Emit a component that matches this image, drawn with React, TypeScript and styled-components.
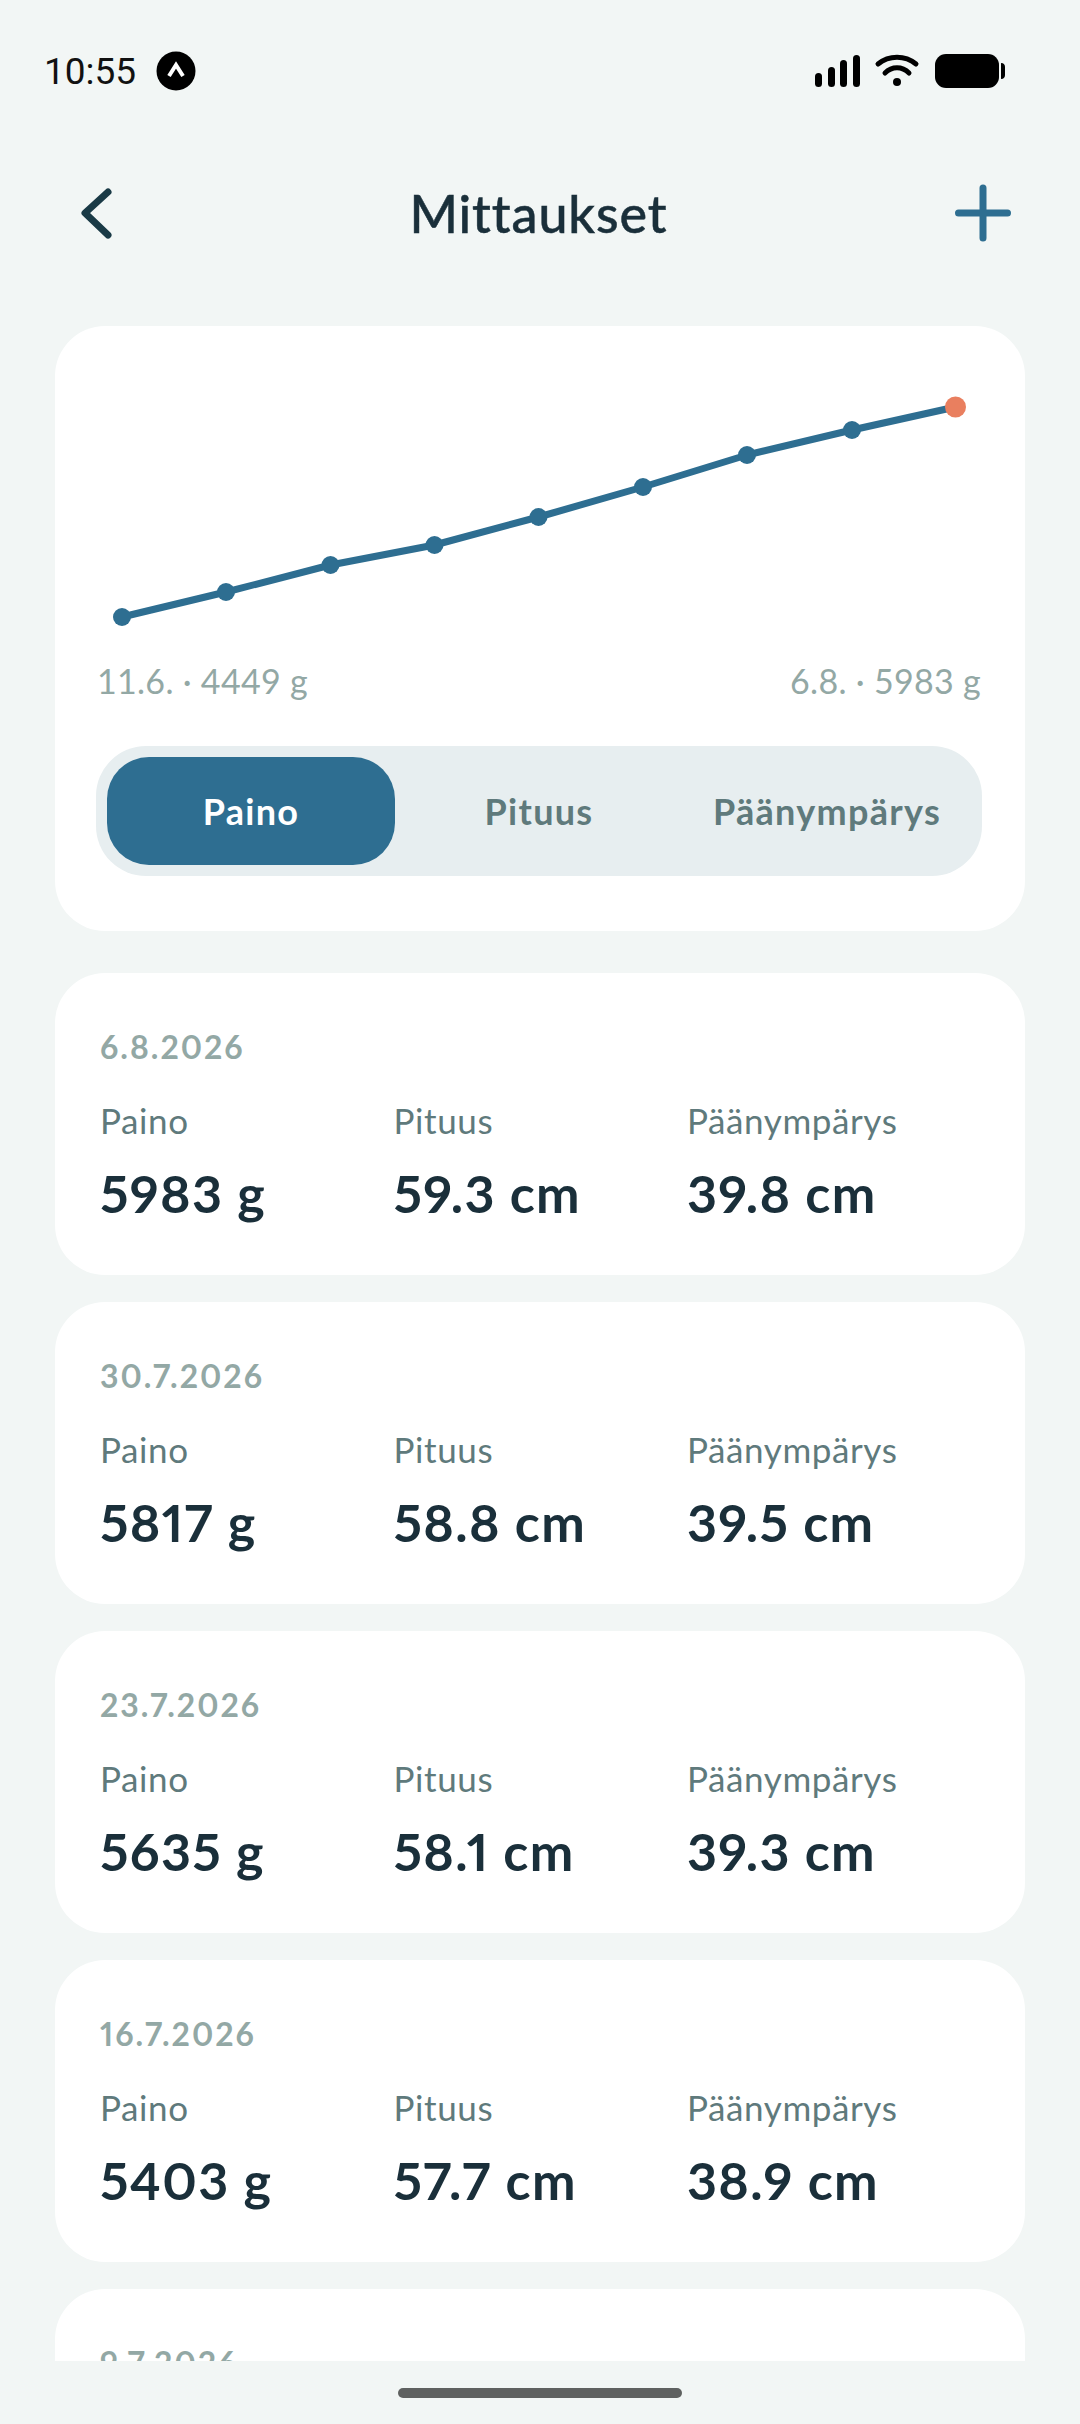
import React from "react";
import styled, { createGlobalStyle } from "styled-components";

const Global = createGlobalStyle`
  html, body { margin: 0; padding: 0; background: #f2f6f5; }
  * { box-sizing: border-box; }
`;

const Screen = styled.div`
  width: 1080px;
  height: 2424px;
  background: #f2f6f5;
  display: flex;
  flex-direction: column;
  overflow: hidden;
  position: relative;
  font-family: "Lato", "Noto Sans", sans-serif;
  font-variant-numeric: proportional-nums;
`;

const StatusBar = styled.div`
  height: 92px;
  flex: none;
  padding: 0 75px 0 44px;
  display: flex;
  align-items: flex-end;
  justify-content: space-between;
`;

const StatusLeft = styled.div`
  display: flex;
  align-items: center;
  gap: 20px;
  height: 40px;
  margin-bottom: 1px;
`;

const StatusRight = styled.svg`
  display: block;
  margin-bottom: 4px;
`;

const Clock = styled.span`
  font-family: Roboto, sans-serif;
  font-size: 37px;
  font-variant-numeric: tabular-nums;
  color: #111;
`;

const NavBar = styled.div`
  height: 234px;
  flex: none;
  padding: 8px 67px 0 80px;
  display: flex;
  align-items: center;
  justify-content: space-between;
`;

const Title = styled.h1`
  margin: 0;
  font-size: 52px;
  font-weight: 500;
  letter-spacing: 0.9px;
  -webkit-text-stroke: 0.5px #1a2f3a;
  color: #1a2f3a;
`;

const Viewport = styled.div`
  height: 2035px;
  flex: none;
  padding: 0 55px;
  display: flex;
  flex-direction: column;
  overflow: hidden;
`;

const ChartCard = styled.section`
  flex: none;
  height: 605px;
  margin-bottom: 42px;
  background: #fff;
  border-radius: 50px;
  padding: 40px 43px 0 41px;
  display: flex;
  flex-direction: column;
`;

const ChartCaption = styled.div`
  display: flex;
  justify-content: space-between;
  padding: 0 1px 0 1px;
  font-size: 34px;
  font-variant-numeric: tabular-nums;
  letter-spacing: 0.3px;
  line-height: 41px;
  color: #93a8a5;
  margin-top: 4px;
`;

const Segments = styled.div`
  margin-top: 45px;
  height: 130px;
  background: #e7eef0;
  border-radius: 50px;
  padding: 11px;
  display: grid;
  grid-template-columns: repeat(3, 1fr);
`;

const Segment = styled.div<{ $active?: boolean }>`
  display: flex;
  align-items: center;
  justify-content: center;
  border-radius: 42px;
  font-size: 36px;
  font-weight: 700;
  letter-spacing: 1.3px;
  color: ${(p) => (p.$active ? "#fff" : "#5f7a7c")};
  background: ${(p) => (p.$active ? "#2e6e91" : "transparent")};
`;

const Card = styled.article`
  flex: none;
  height: 302px;
  margin-bottom: 27px;
  background: #fff;
  border-radius: 50px;
  padding: 54px 45px 0;
`;

const DateLine = styled.div`
  font-size: 32px;
  font-weight: 700;
  letter-spacing: 2px;
  color: #93a8a5;
  line-height: 40px;
`;

const Stats = styled.div`
  margin-top: 31px;
  display: grid;
  grid-template-columns: repeat(3, 293.5px);
`;

const StatLabel = styled.div`
  font-size: 35px;
  letter-spacing: 0.6px;
  color: #5f7a7c;
  line-height: 44px;
`;

const StatValue = styled.div`
  margin-top: 21px;
  font-size: 52px;
  font-weight: 700;
  letter-spacing: 1.3px;
  color: #1a2f3a;
  line-height: 60px;
  white-space: nowrap;
`;

const HomeBar = styled.div`
  position: absolute;
  left: 398px;
  top: 2388px;
  width: 284px;
  height: 10px;
  border-radius: 5px;
  background: #5f6160;
`;

const points = [
  [122, 617], [226, 592], [330.5, 565], [434.5, 545], [538.5, 517],
  [643, 487], [747, 455], [852, 430], [955.5, 407],
];

const WeightChart = () => (
  <svg width="886" height="290" viewBox="96 366 886 290" style={{ flex: "none", display: "block" }}>
    <polyline
      points={points.map((p) => p.join(",")).join(" ")}
      fill="none"
      stroke="#2e6e91"
      strokeWidth="7"
      strokeLinejoin="round"
    />
    {points.map(([x, y], i) => (
      <circle
        key={x}
        cx={x}
        cy={y}
        r={i === points.length - 1 ? 10.5 : 9}
        fill={i === points.length - 1 ? "#e97f5f" : "#2e6e91"}
      />
    ))}
  </svg>
);

type Row = { date: string; stats?: { w: string; h: string; c: string } };

const records: Row[] = [
  { date: "6.8.2026", stats: { w: "5983 g", h: "59.3 cm", c: "39.8 cm" } },
  { date: "30.7.2026", stats: { w: "5817 g", h: "58.8 cm", c: "39.5 cm" } },
  { date: "23.7.2026", stats: { w: "5635 g", h: "58.1 cm", c: "39.3 cm" } },
  { date: "16.7.2026", stats: { w: "5403 g", h: "57.7 cm", c: "38.9 cm" } },
  { date: "9.7.2026" },
];

export default function App() {
  return (
    <Screen>
      <Global />
      <StatusBar>
        <StatusLeft>
          <Clock>10:55</Clock>
          <svg width="40" height="40" viewBox="0 0 40 40">
            <circle cx="20" cy="20" r="19.5" fill="#000" />
            <path d="M13 25 L20 14 L27 25" fill="none" stroke="#fff" strokeWidth="4" />
          </svg>
        </StatusLeft>
        <StatusRight width="190" height="34" viewBox="0 0 190 34">
          <g fill="#000">
            <rect x="0" y="19" width="7" height="14" rx="3.5" />
            <rect x="13" y="13" width="7" height="20" rx="3.5" />
            <rect x="25" y="6" width="7" height="27" rx="3.5" />
            <rect x="38" y="1" width="7" height="32" rx="3.5" />
            <circle cx="82" cy="28" r="4" />
            <rect x="120" y="0" width="64" height="34" rx="11" />
            <path d="M186 9 c3 0 4 2 4 4 v8 c0 2 -1 4 -4 4z" />
          </g>
          <path d="M63 10 C74 1 90 1 101 10" fill="none" stroke="#000" strokeWidth="5" strokeLinecap="round" />
          <path d="M70 19 C77 12 87 12 94 19" fill="none" stroke="#000" strokeWidth="5" strokeLinecap="round" />
        </StatusRight>
      </StatusBar>
      <NavBar>
        <svg width="44" height="56" viewBox="0 0 44 56">
          <path d="M28 7 L5 28 L28 50" fill="none" stroke="#1a3a46" strokeWidth="7" strokeLinecap="round" strokeLinejoin="round" />
        </svg>
        <Title>Mittaukset</Title>
        <svg width="60" height="60" viewBox="0 0 60 60">
          <path d="M30 5 V55 M5.5 30 H54.5" fill="none" stroke="#2e6e91" strokeWidth="7" strokeLinecap="round" />
        </svg>
      </NavBar>
      <Viewport>
        <ChartCard>
          <WeightChart />
          <ChartCaption>
            <span>11.6. · 4449 g</span>
            <span>6.8. · 5983 g</span>
          </ChartCaption>
          <Segments>
            <Segment $active>Paino</Segment>
            <Segment>Pituus</Segment>
            <Segment>Päänympärys</Segment>
          </Segments>
        </ChartCard>
        {records.map((r) => (
          <Card key={r.date}>
            <DateLine>{r.date}</DateLine>
            {r.stats && (
              <Stats>
                <div>
                  <StatLabel>Paino</StatLabel>
                  <StatValue>{r.stats.w}</StatValue>
                </div>
                <div>
                  <StatLabel>Pituus</StatLabel>
                  <StatValue>{r.stats.h}</StatValue>
                </div>
                <div>
                  <StatLabel>Päänympärys</StatLabel>
                  <StatValue>{r.stats.c}</StatValue>
                </div>
              </Stats>
            )}
          </Card>
        ))}
      </Viewport>
      <HomeBar />
    </Screen>
  );
}
